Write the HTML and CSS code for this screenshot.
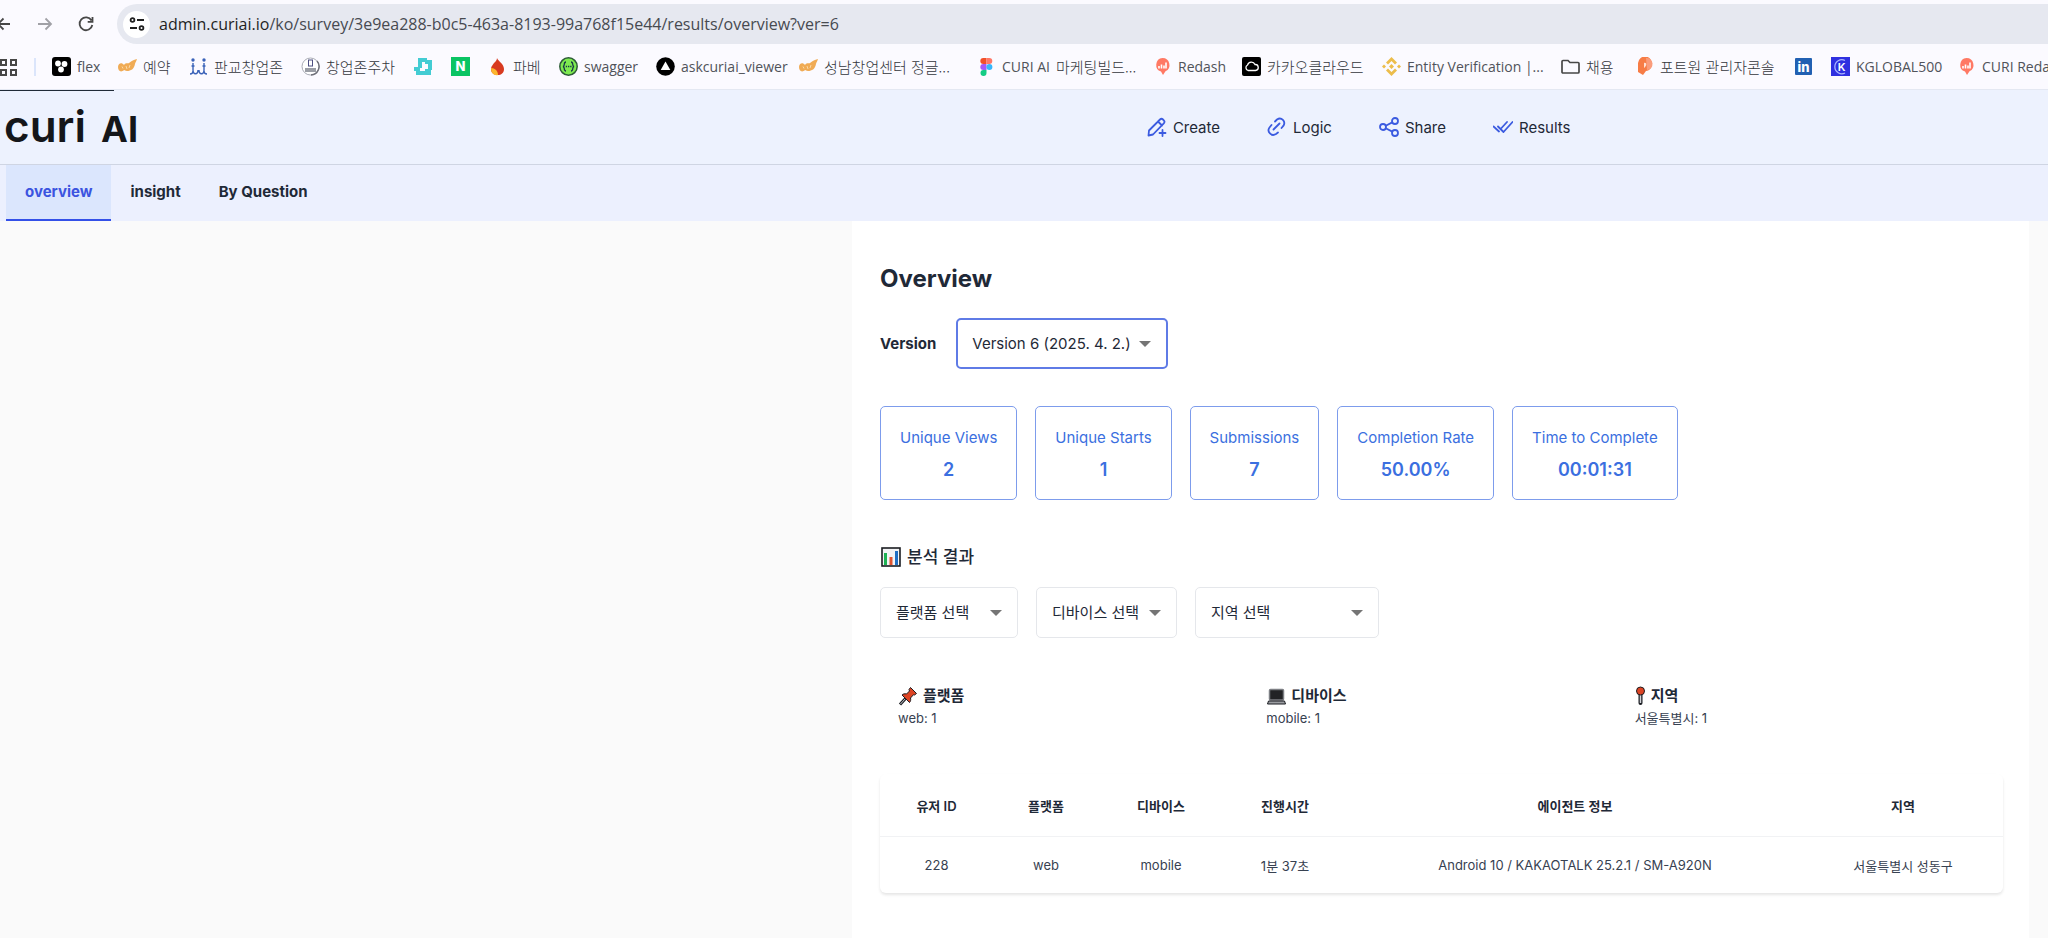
FILE: index.html
```
<!DOCTYPE html>
<html lang="ko">
  <head>
    <meta charset="utf-8">
    <title>Curi AI</title>
    <link rel="stylesheet" href="styles.css">
  </head>
  <body>
    <svg class="defs" width="0" height="0" aria-hidden="true">
      <symbol id="wing" viewBox="0 0 19 19">
        <path d="M0 10c0-4 4-5 6-2 2-3 4-1 5-2 2-1 3-3 8-4-1 3-2 4-2 5-1 5-4 7-8 7-2 0-2-1-3-1-3 3-6 1-6-3z" fill="#f0ab55"/>
        <path d="M4 9.500l1 2M8 9l1 3M12 8l-1 3" stroke="#fbd9a6" fill="none"/>
      </symbol>
      <symbol id="redash" viewBox="0 0 19 19">
        <path d="M9.500 1a7 7 0 0 1 3 13.300L10 18l-2-3.400A7 7 0 0 1 9.500 1z" fill="#ff7964"/>
        <path d="M6 9v2.500M8.500 7.500v4M11 8.500v3M13 5.500v6" stroke="#fff" stroke-width="1.600"/>
      </symbol>
    </svg>

    <div class="toolbar">
      <button class="tool" aria-label="Back">
        <svg width="20" height="20" viewBox="0 0 20 20"><path d="M16 10H4M9.500 4.500L4 10l5.500 5.500" class="line"/></svg>
      </button>
      <button class="tool forward" aria-label="Forward">
        <svg width="20" height="20" viewBox="0 0 20 20"><path d="M3 10h13M10.500 4.500L16 10l-5.500 5.500" class="line"/></svg>
      </button>
      <button class="tool" aria-label="Reload">
        <svg width="20" height="20" viewBox="0 0 20 20"><path d="M15.500 6.500A6.400 6.400 0 1 0 16.300 11M16.500 3v4.800h-4.800" class="line"/></svg>
      </button>
      <div class="address">
        <button class="site-info" aria-label="Site information">
          <svg width="18" height="18" viewBox="0 0 18 18"><g fill="none" stroke="#1f1f1f" stroke-width="1.800"><circle cx="4.500" cy="5" r="1.900"/><path d="M9 5h7M2 13h7"/><circle cx="13.500" cy="13" r="1.900"/></g></svg>
        </button>
        <span class="url"><b>admin.curiai.io</b>/ko/survey/3e9ea288-b0c5-463a-8193-99a768f15e44/results/overview?ver=6</span>
      </div>
    </div>

    <div class="bookmarks">
      <button class="apps" aria-label="Apps">
        <svg width="18" height="18" viewBox="0 0 18 18"><g fill="none" stroke="#474747" stroke-width="2"><rect x="1" y="2" width="5" height="5"/><rect x="11" y="2" width="5" height="5"/><rect x="1" y="12" width="5" height="5"/><rect x="11" y="12" width="5" height="5"/></g></svg>
      </button>
      <a class="bookmark" href="#">
        <svg viewBox="0 0 19 19"><rect width="19" height="19" rx="3"/><g fill="#fff"><circle cx="6" cy="6.500" r="2.900"/><circle cx="12.500" cy="7" r="2.900"/><circle cx="9" cy="12.500" r="2.900"/></g></svg>flex
      </a>
      <a class="bookmark ko" href="#"><svg><use href="#wing"/></svg>예약</a>
      <a class="bookmark ko" href="#">
        <svg viewBox="0 0 19 19"><g fill="none" stroke="#3a62b8" stroke-width="1.400"><path d="M4 6v7c0 5 5 5 5 0M10 13c0 5 5 5 5 0V6M1 17c2 0 3-1 3-3M18 17c-2 0-3-1-3-3M2.500 9h3M13.500 9h3"/></g><circle cx="4" cy="3" r="1.700" fill="#3a62b8"/><circle cx="15" cy="3" r="1.700" fill="#3a62b8"/></svg>판교창업존
      </a>
      <a class="bookmark ko" href="#">
        <svg viewBox="0 0 19 19"><circle cx="9.500" cy="9.500" r="8.500" fill="#fff" stroke="#a9abb5"/><path d="M16 4a8.500 8.500 0 0 1-6 14" fill="none" stroke="#6e6f78" stroke-width="1.400"/><rect x="7.500" y="3" width="4" height="6" fill="none" stroke="#4d4f82"/><path d="M4 12h11M4 14h11" stroke="#7a7d88" stroke-width="1.400"/></svg>창업존주차
      </a>
      <a class="bookmark" href="#" aria-label="Workspace">
        <svg viewBox="0 0 19 19"><path d="M4 1h9v4H8v6H4zM13 3h5v10h-4V7h-3V5h2zM0 10h6v4h5v4H2v-4H0zM11 12h3v1h3v5h-6z" fill="#43ccd3"/></svg>
      </a>
      <a class="bookmark" href="#" aria-label="Naver">
        <svg viewBox="0 0 19 19"><rect width="19" height="19" fill="#0ac463"/><text x="9.500" y="14" text-anchor="middle" class="badge-text">N</text></svg>
      </a>
      <a class="bookmark ko" href="#">
        <svg viewBox="0 0 19 19"><path d="M9 1c1 3 7 6 7 11 0 4-3 6-6 6-4 0-7-2-7-6 0-3 2-4 3-6 2-2 3-3 3-5z" fill="#d83a20"/><path d="M3 11c4 0 7 3 7 7-4 1-7-2-7-7z" fill="#fcb62e"/></svg>파베
      </a>
      <a class="bookmark" href="#">
        <svg viewBox="0 0 19 19"><circle cx="9.500" cy="9.500" r="8.700" fill="#7eea50" stroke="#2d5c37" stroke-width="1.500"/><g fill="none" stroke="#173647" stroke-width="1.300"><path d="M7 5C4 5 6.500 9 4 9.500 6.500 10 4 14 7 14M12 5c3 0 .5 4 3 4.500-2.500.5 0 4.500-3 4.500"/><path d="M6.800 9.500h5.700" stroke-dasharray="1.300 .9"/></g></svg>swagger
      </a>
      <a class="bookmark" href="#">
        <svg viewBox="0 0 19 19"><circle cx="9.500" cy="9.500" r="9.300"/><path d="M9.500 4.500l4.800 8.500H4.700z" fill="#fff"/></svg>askcuriai_viewer
      </a>
      <a class="bookmark ko" href="#"><svg><use href="#wing"/></svg>성남창업센터 정글...</a>
      <a class="bookmark" href="#">
        <svg viewBox="0 0 19 19"><path d="M9.500 1v6H6.300a3 3 0 0 1 0-6z" fill="#f2502a"/><path d="M9.500 1h2.800a3 3 0 0 1 0 6H9.500z" fill="#ff7767"/><path d="M9.500 7v6H6.300a3 3 0 0 1 0-6z" fill="#a35af8"/><circle cx="12.400" cy="10" r="3" fill="#35b6fa"/><path d="M9.500 13v3a3 3 0 1 1-3.200-3z" fill="#15cc85"/></svg>CURI AI <span class="ko">마케팅빌드...</span>
      </a>
      <a class="bookmark" href="#"><svg><use href="#redash"/></svg>Redash</a>
      <a class="bookmark ko" href="#">
        <svg viewBox="0 0 19 19"><rect width="19" height="19" rx="2"/><path d="M6 13.500a3 3 0 0 1-.5-5.500 4 4 0 0 1 7.500-.5 3 3 0 0 1 .5 6z" fill="none" stroke="#fff" stroke-width="1.300"/></svg>카카오클라우드
      </a>
      <a class="bookmark" href="#">
        <svg viewBox="0 0 19 19"><path d="M9.500 0L15 5.500l-2 2-3.500-3.500L6 7.500l-2-2zM9.500 19L4 13.500l2-2 3.500 3.500 3.500-3.500 2 2zM2 7.500l2 2-2 2-2-2zM17 7.500l2 2-2 2-2-2zM9.500 7l2.500 2.500L9.500 12 7 9.500z" fill="#ecbd4b"/></svg>Entity Verification |...
      </a>
      <a class="bookmark ko folder" href="#">
        <svg viewBox="0 0 19 19"><path d="M2 3.500h5l2 2h8q1 0 1 1v8.500q0 1-1 1H2q-1 0-1-1V4.500q0-1 1-1z" fill="none" stroke="#474747" stroke-width="1.700"/></svg>채용
      </a>
      <a class="bookmark ko" href="#">
        <svg viewBox="0 0 19 19"><path d="M3 6a7 7 0 0 1 14 1c0 4-3 7-6 7l-3 4-5-3z" fill="#f77c46"/><path d="M11 1a6 6 0 0 1 1 12z" fill="#fa9c7c"/><path d="M9 6c3-1 3 3 0 5z" fill="#ffe2d6"/></svg>포트원 관리자콘솔
      </a>
      <a class="bookmark" href="#" aria-label="LinkedIn">
        <svg viewBox="0 0 19 19"><rect x="1" y="1" width="17" height="17" rx="1" fill="#2160b2"/><text x="9.500" y="15" text-anchor="middle" class="badge-text">in</text></svg>
      </a>
      <a class="bookmark" href="#">
        <svg viewBox="0 0 19 19"><rect width="19" height="19" fill="#2f30e0"/><path d="M14 3.500A7 7 0 1 0 14 16" fill="none" stroke="#a9b4ff" stroke-width="1.300"/><text x="10.500" y="13.500" text-anchor="middle" class="badge-text thin">K</text></svg>KGLOBAL500
      </a>
      <a class="bookmark" href="#"><svg><use href="#redash"/></svg>CURI Redash</a>
    </div>

    <header class="header">
      <a class="logo" href="#">curi <span>AI</span></a>
      <nav class="nav">
        <a href="#">
          <svg viewBox="0 0 20 20"><path d="M1.500 18.500l.5-5L13 2.500q1.500-1.500 3 0l.8.8q1.500 1.500 0 3L6 17.500zM11 4.500l4 4M15.500 13v6M12.500 16h6"/></svg>Create
        </a>
        <a href="#">
          <svg viewBox="0 0 20 20"><path d="M6.500 12.500l6-6M8 4.500l2-2c4.500-3 9 2 6.500 6.200l-2 2.300M4.500 8l-2 2.500c-3 4 2 9.500 6.500 6.500l2-1.500"/></svg>Logic
        </a>
        <a href="#">
          <svg viewBox="0 0 20 20"><circle cx="4" cy="10" r="3"/><circle cx="16" cy="4" r="3"/><circle cx="16" cy="16" r="3"/><path d="M6.700 8.700l6.600-3.300M6.700 11.300l6.600 3.300"/></svg>Share
        </a>
        <a href="#">
          <svg viewBox="0 0 20 20"><path d="M.5 9.500l5.500 5M5 9.500l5.500 5.500 9-10M8.500 11l5.500-6"/></svg>Results
        </a>
      </nav>
    </header>

    <nav class="tabs">
      <a class="active" href="#">overview</a>
      <a href="#">insight</a>
      <a href="#">By Question</a>
    </nav>

    <div class="page">
      <main class="panel">
        <h1>Overview</h1>

        <div class="version">
          <label for="version">Version</label>
          <select id="version" class="select focused">
            <option>Version 6 (2025. 4. 2.)</option>
          </select>
        </div>

        <div class="stats">
          <div class="stat"><span>Unique Views</span><strong>2</strong></div>
          <div class="stat"><span>Unique Starts</span><strong>1</strong></div>
          <div class="stat"><span>Submissions</span><strong>7</strong></div>
          <div class="stat"><span>Completion Rate</span><strong>50.00%</strong></div>
          <div class="stat"><span>Time to Complete</span><strong>00:01:31</strong></div>
        </div>

        <h2>
          <svg width="22" height="22" viewBox="0 0 22 22"><rect x="2" y="2" width="18" height="18" fill="#f3f4f6" stroke="#1b1d22" stroke-width="1.600"/><path d="M5.500 7v12" stroke="#1fb355" stroke-width="3"/><path d="M11 11v8" stroke="#e0532f" stroke-width="3"/><path d="M16.500 5v14" stroke="#1f6fc4" stroke-width="3"/></svg>
          분석 결과
        </h2>

        <div class="filters">
          <select class="select platform" aria-label="플랫폼 선택"><option>플랫폼 선택</option></select>
          <select class="select device" aria-label="디바이스 선택"><option>디바이스 선택</option></select>
          <select class="select region" aria-label="지역 선택"><option>지역 선택</option></select>
        </div>

        <div class="summary">
          <section>
            <h3>
              <svg width="20" height="20" viewBox="0 0 20 20"><path d="M2 18.500l6-6.500" stroke="#1b1d22" stroke-width="3"/><path d="M2.500 18l5-5.500" stroke="#c7cad1"/><path d="M12.500 1.500l6 6-2 1.500-1-.3-3 3.300c.5 2 0 3.500-1 4.500L4 9c1-1 2.500-1.500 4.500-1l3-3-.5-1.500z" fill="#dd4424" stroke="#1b1d22" stroke-linejoin="round"/></svg>
              플랫폼
            </h3>
            <p>web: 1</p>
          </section>
          <section>
            <h3>
              <svg width="20" height="20" viewBox="0 0 20 20"><rect x="3.500" y="3.500" width="14" height="10.500" rx="1" fill="#222326" stroke="#7d7f84" stroke-width="1.500"/><path d="M2.500 15h16l1 3h-18z" fill="#9b9da1" stroke="#1b1d22"/></svg>
              디바이스
            </h3>
            <p>mobile: 1</p>
          </section>
          <section>
            <h3>
              <svg width="11" height="20" viewBox="0 0 11 20"><path d="M5.500 8v9" stroke="#1b1d22" stroke-width="4" stroke-linecap="round"/><path d="M5.500 8v9" stroke="#d3d5da" stroke-width="1.500"/><circle cx="5.500" cy="5" r="4" fill="#dd4424" stroke="#1b1d22"/></svg>
              지역
            </h3>
            <p>서울특별시: 1</p>
          </section>
        </div>

        <table class="users">
          <colgroup>
            <col class="col-id">
            <col class="col-platform">
            <col class="col-device">
            <col class="col-time">
            <col>
            <col class="col-region">
          </colgroup>
          <thead>
            <tr>
              <th>유저 ID</th>
              <th>플랫폼</th>
              <th>디바이스</th>
              <th>진행시간</th>
              <th>에이전트 정보</th>
              <th>지역</th>
            </tr>
          </thead>
          <tbody>
            <tr>
              <td>228</td>
              <td>web</td>
              <td>mobile</td>
              <td>1분 37초</td>
              <td>Android 10 / KAKAOTALK 25.2.1 / SM-A920N</td>
              <td>서울특별시 성동구</td>
            </tr>
          </tbody>
        </table>
      </main>
    </div>
  </body>
</html>
```
FILE: styles.css
```
* {
  box-sizing: border-box;
}
body {
  margin: 0;
  font-family: Inter, "Noto Sans CJK KR", sans-serif;
  font-size: 15px;
  color: #1f2937;
  background: #fff;
  overflow-x: hidden;
}
a {
  color: inherit;
  text-decoration: none;
}
button {
  padding: 0;
  border: none;
  background: none;
  cursor: pointer;
}
svg {
  flex: none;
}
.defs {
  position: absolute;
}

/* browser chrome */
.toolbar {
  display: flex;
  align-items: center;
  padding-top: 4px;
  background: #fbfaff;
}
.tool {
  display: flex;
  width: 20px;
  margin-right: 21px;
}
.tool:first-child {
  margin-left: -6px;
}
.tool .line {
  fill: none;
  stroke: #474747;
  stroke-width: 1.8;
}
.forward .line {
  stroke: #a0a0a6;
}
.address {
  display: flex;
  flex: 1;
  align-items: center;
  height: 40px;
  padding-left: 6px;
  border-radius: 20px 0 0 20px;
  background: #e6e8f0;
}
.site-info {
  display: flex;
  align-items: center;
  justify-content: center;
  width: 27px;
  height: 27px;
  margin-right: 9px;
  border-radius: 50%;
  background: #fff;
}
.url {
  font-family: "Open Sans", sans-serif;
  font-size: 16px;
  color: #474a50;
}
.url b {
  font-weight: 400;
  color: #1f1f1f;
}
.bookmarks {
  display: grid;
  grid-template-columns: 52px 66px 71px 112px 113px 37px 37px 71px 97px 143px 178px 176px 89px 140px 179px 74px 159px 37px 126px 1fr;
  align-items: center;
  height: 45px;
  overflow: hidden;
  font-family: "Open Sans", "Noto Sans CJK KR", sans-serif;
  font-size: 14px;
  line-height: 20px;
  color: #50535a;
  background: #fbfaff;
}
.apps {
  display: flex;
  height: 18px;
  margin-right: 16px;
  border-right: 2px solid #dbe5fb;
}
.bookmark {
  display: flex;
  align-items: center;
  gap: 6px;
  white-space: nowrap;
}
.bookmark svg {
  width: 19px;
  height: 19px;
}
.bookmark.ko,
.bookmark .ko {
  font-family: "Noto Sans CJK KR", sans-serif;
  font-size: 15px;
  font-weight: 300;
  color: #33363c;
}
.badge-text {
  font-family: Inter, sans-serif;
  font-size: 13px;
  font-weight: 800;
  fill: #fff;
}
.badge-text.thin {
  font-size: 11px;
  font-weight: 600;
}

/* app header */
.header {
  display: grid;
  grid-template-columns: 56% 1fr;
  align-items: center;
  height: 76px;
  border-top: 1px solid #e4e8f2;
  border-bottom: 1px solid #cfd5e3;
  background: linear-gradient(#1f2a37, #1f2a37) 0 0 / 114px 1px no-repeat #edf2fe;
}
.logo {
  padding-left: 4px;
  font-size: 44px;
  font-weight: 600;
  line-height: 52px;
  color: #14161a;
}
.logo span {
  margin-left: 4px;
  font-size: 36px;
  font-weight: 700;
}
.nav {
  display: flex;
  gap: 47px;
}
.nav a {
  display: flex;
  align-items: center;
  gap: 6px;
}
.nav svg {
  width: 20px;
  height: 20px;
  fill: none;
  stroke: #3b5be0;
  stroke-width: 1.8;
  stroke-linecap: round;
  stroke-linejoin: round;
}
.tabs {
  display: flex;
  padding-left: 6px;
  font-weight: 700;
  background: #ecf0fe;
}
.tabs a {
  padding: 0 19px;
  line-height: 54px;
  border-bottom: 2px solid transparent;
}
.tabs .active {
  color: #3b54e0;
  border-color: #3350e8;
  background: #dbe6fd;
}

/* results page */
.page {
  display: grid;
  grid-template-columns: 852px 1fr 19px;
  background: #fafafa;
}
.panel {
  grid-column: 2;
  padding: 40px 26px 45px 28px;
  background: #fff;
}
h1 {
  margin: 0 0 21px;
  font-size: 24px;
  font-weight: 700;
  line-height: 36px;
}
.version {
  display: flex;
  align-items: center;
  gap: 20px;
  margin-bottom: 37px;
  font-weight: 700;
}
.select {
  height: 51px;
  padding: 0 15px;
  appearance: none;
  border: 1px solid #e5e7eb;
  border-radius: 5px;
  color: #1f2937;
  font-family: inherit;
  font-size: 15px;
  background: url("data:image/svg+xml,%3Csvg xmlns='http://www.w3.org/2000/svg' width='12' height='6'%3E%3Cpath d='M0 0h12L6 6z' fill='%23757575'/%3E%3C/svg%3E") right 15px center no-repeat #fff;
}
.select.focused {
  width: 212px;
  padding: 0 14px;
  border: 2px solid #5f7be6;
}
.stats {
  display: flex;
  gap: 18px;
  margin-bottom: 43px;
  color: #3b6fe0;
}
.stat {
  display: flex;
  flex-direction: column;
  gap: 8px;
  padding: 19px 19px 17px;
  border: 1px solid #7d9cec;
  border-radius: 5px;
  text-align: center;
}
.stat span {
  line-height: 24px;
}
.stat strong {
  font-size: 18px;
  font-weight: 600;
  line-height: 24px;
}
h2 {
  display: flex;
  align-items: center;
  gap: 5px;
  margin: 0 0 16px;
  font-size: 17px;
  font-weight: 500;
  line-height: 28px;
}
.filters {
  display: flex;
  gap: 18px;
  margin-bottom: 46px;
}
.platform {
  width: 138px;
}
.device {
  width: 141px;
}
.region {
  width: 184px;
}
.summary {
  display: grid;
  grid-template-columns: repeat(3, 1fr);
  gap: 18px;
  margin-bottom: 46px;
  padding: 0 18px;
}
h3 {
  display: flex;
  align-items: center;
  gap: 5px;
  margin: 0;
  font-size: 15px;
  font-weight: 700;
  line-height: 24px;
}
.summary p {
  margin: 0;
  font-size: 13px;
  line-height: 20px;
  color: #374151;
}
.users {
  width: 100%;
  table-layout: fixed;
  border-spacing: 0;
  border-radius: 6px;
  box-shadow: 0 2px 3px rgba(0, 0, 0, 0.1);
  font-size: 13px;
  text-align: center;
}
.users th {
  height: 63px;
  padding: 0;
  border-bottom: 1px solid #f1f2f4;
  font-weight: 600;
}
.users td {
  height: 56px;
  padding: 0;
  color: #374151;
}
.col-id {
  width: 113px;
}
.col-platform {
  width: 106px;
}
.col-device,
.col-time {
  width: 124px;
}
.col-region {
  width: 200px;
}
```
